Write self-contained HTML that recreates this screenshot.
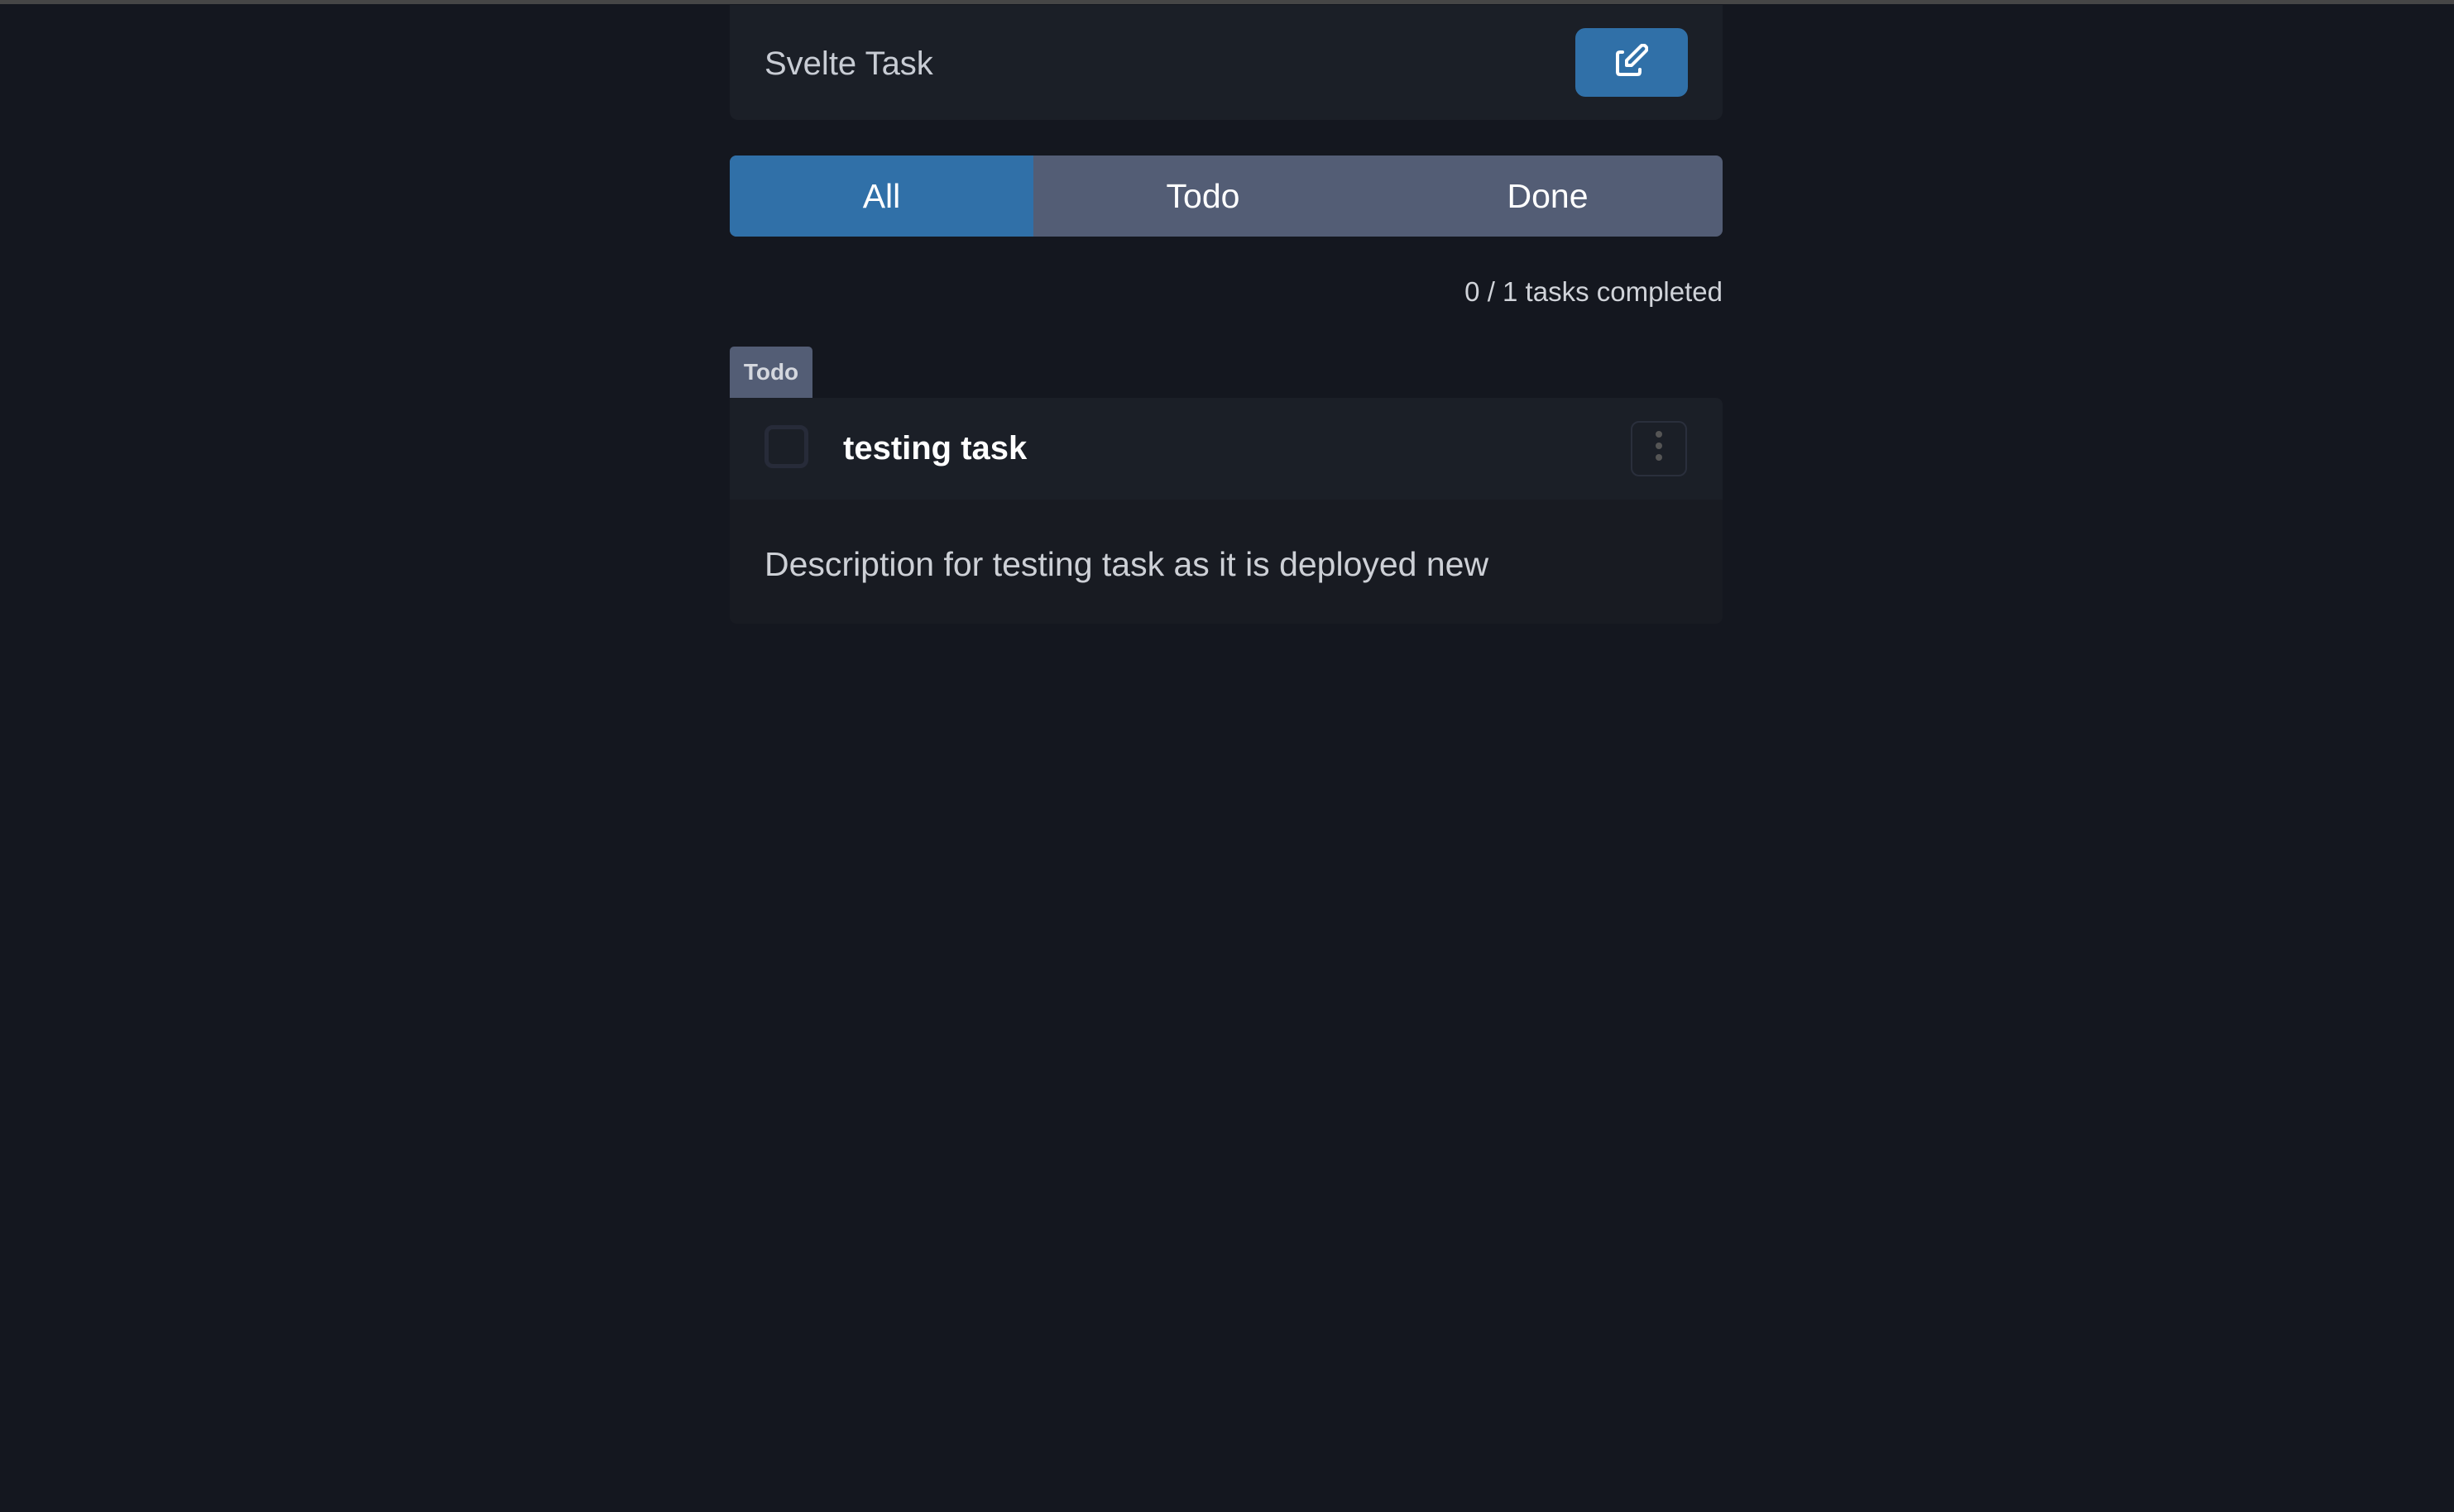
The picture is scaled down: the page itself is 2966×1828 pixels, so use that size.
<!DOCTYPE html>
<html><head><meta charset="utf-8"><style>
*{box-sizing:border-box;margin:0;padding:0}
body{width:2966px;height:1828px;background:#14171f;font-family:"Liberation Sans",sans-serif;position:relative;overflow:hidden}
.top{position:absolute;left:0;top:0;width:2966px;height:5px;background:#464646}
.hdr{position:absolute;left:882px;top:6px;width:1200px;height:139px;background:#1b1f27;border-radius:0 0 10px 10px}
.hdr .t{position:absolute;left:42px;top:46px;font-size:40px;color:#c8ccd4;line-height:50px}
.btn{position:absolute;left:1022px;top:28px;width:136px;height:83px;background:#3070a8;border-radius:12px}
.btn svg{position:absolute;left:48px;top:19px}
.tabs{position:absolute;left:882px;top:188px;width:1200px;height:98px;background:#535d75;border-radius:8px;overflow:hidden}
.tabs div{position:absolute;top:0;height:98px;line-height:98px;text-align:center;color:#fff;font-size:41px}
.cnt{position:absolute;right:884px;top:333px;font-size:33px;color:#d0d3d9;line-height:40px}
.tag{position:absolute;left:882px;top:419px;width:100px;height:62px;background:#535d75;border-radius:5px 5px 0 0;color:#d4d7de;font-size:28px;font-weight:bold;line-height:62px;text-align:center}
.card{position:absolute;left:882px;top:481px;width:1200px;height:273px;background:#181b22;border-radius:0 8px 8px 8px;overflow:hidden}
.ch{position:absolute;left:0;top:0;width:1200px;height:123px;background:#1b1f27}
.cb{position:absolute;left:42px;top:33px;width:53px;height:52px;border:5px solid #272b39;border-radius:10px}
.tt{position:absolute;left:137px;top:36px;font-size:40px;font-weight:bold;color:#fff;line-height:50px}
.keb{position:absolute;left:1089px;top:28px;width:68px;height:67px;border:2px solid #2a2f3c;border-radius:10px}
.keb i{position:absolute;left:28px;width:8px;height:8px;border-radius:50%;background:#555}
.desc{position:absolute;left:42px;top:176px;font-size:41px;color:#cdd0d6;line-height:50px}
</style></head><body>
<div class="top"></div>
<div class="hdr"><div class="t">Svelte Task</div>
<div class="btn"><svg width="40" height="40" viewBox="0 0 40 40" fill="none" stroke="#fff" stroke-width="4" stroke-linecap="round" stroke-linejoin="round"><path d="M9 10 H6 Q3 10 3 13 V34 Q3 37 6 37 H27 Q30 37 30 34 V31"/><path d="M14 26 L14 20 L31 3 Q34 0 37 3 Q40 6 37 9 L20 26 Z"/></svg></div></div>
<div class="tabs"><div style="left:0;width:367px;background:#3070a8">All</div><div style="left:367px;width:410px">Todo</div><div style="left:777px;width:423px">Done</div></div>
<div class="cnt">0 / 1 tasks completed</div>
<div class="tag">Todo</div>
<div class="card"><div class="ch"><div class="cb"></div><div class="tt">testing task</div>
<div class="keb"><i style="top:10px"></i><i style="top:24px"></i><i style="top:38px"></i></div></div>
<div class="desc">Description for testing task as it is deployed new</div></div>
</body></html>
